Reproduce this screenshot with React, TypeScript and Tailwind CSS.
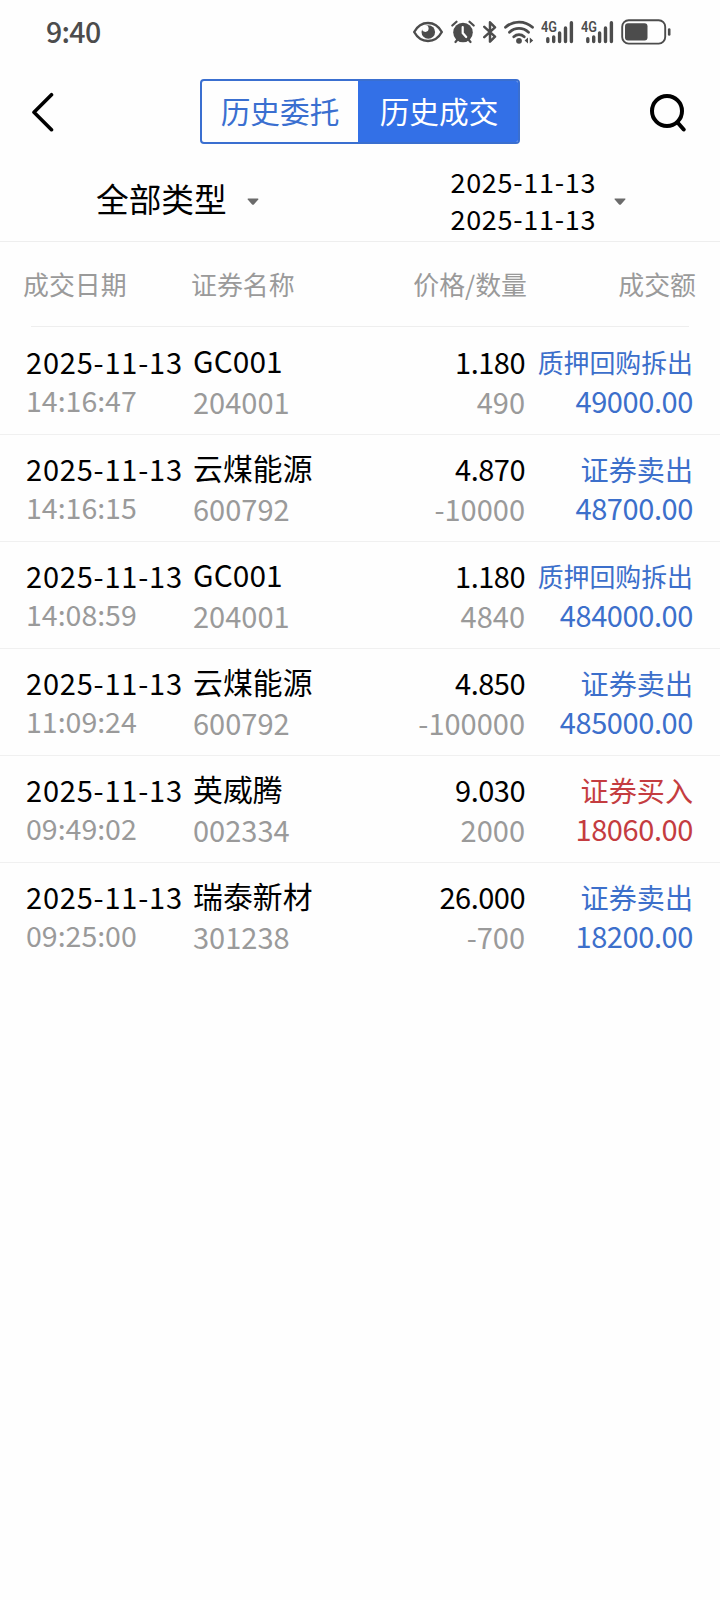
import React from 'react';

type Side = 'buy' | 'sell';

type Trade = {
  date: string;
  time: string;
  name: string;
  code: string;
  price: string;
  quantity: string;
  action: string;
  amount: string;
  side: Side;
};

const trades: Trade[] = [
  { date: '2025-11-13', time: '14:16:47', name: 'GC001', code: '204001', price: '1.180', quantity: '490', action: '质押回购拆出', amount: '49000.00', side: 'sell' },
  { date: '2025-11-13', time: '14:16:15', name: '云煤能源', code: '600792', price: '4.870', quantity: '-10000', action: '证券卖出', amount: '48700.00', side: 'sell' },
  { date: '2025-11-13', time: '14:08:59', name: 'GC001', code: '204001', price: '1.180', quantity: '4840', action: '质押回购拆出', amount: '484000.00', side: 'sell' },
  { date: '2025-11-13', time: '11:09:24', name: '云煤能源', code: '600792', price: '4.850', quantity: '-100000', action: '证券卖出', amount: '485000.00', side: 'sell' },
  { date: '2025-11-13', time: '09:49:02', name: '英威腾', code: '002334', price: '9.030', quantity: '2000', action: '证券买入', amount: '18060.00', side: 'buy' },
  { date: '2025-11-13', time: '09:25:00', name: '瑞泰新材', code: '301238', price: '26.000', quantity: '-700', action: '证券卖出', amount: '18200.00', side: 'sell' },
];

const EyeIcon = () => (
  <svg width="30" height="22" viewBox="0 0 30 22" fill="none">
    <path d="M1.2 11C4.500 5 9.300 2 15 2s10.500 3 13.800 9C25.500 17 20.700 20 15 20S4.500 17 1.200 11Z" stroke="currentColor" strokeWidth="2.400" strokeLinejoin="round" />
    <circle cx="15.300" cy="11" r="6.800" fill="currentColor" />
    <circle cx="12.300" cy="7.600" r="3.300" fill="#fefefe" />
  </svg>
);

const AlarmIcon = () => (
  <svg width="24" height="24" viewBox="0 0 24 24" fill="none">
    <circle cx="12" cy="12.500" r="9.800" fill="currentColor" />
    <path d="M1.300 5.500 5.500 1.700M22.700 5.500 18.500 1.700M4.500 22l2.500-3M19.500 22 17 19" stroke="currentColor" strokeWidth="2.200" strokeLinecap="round" />
    <path d="M11.700 7v6l3.500 4" stroke="#fff" strokeWidth="2.200" strokeLinecap="round" />
  </svg>
);

const BluetoothIcon = () => (
  <svg width="14" height="24" viewBox="0 0 14 24" fill="none">
    <path d="M1.300 6.800 12 16.700l-5 5V2.300l5 5L1.300 17.200" stroke="currentColor" strokeWidth="2.500" strokeLinejoin="round" strokeLinecap="round" />
  </svg>
);

const WifiIcon = () => (
  <svg width="30" height="24" viewBox="0 0 30 24" fill="none">
    <path d="M1.500 7.300c7.500-7 19.500-7 27 0M5.500 12.200c5.500-5 13.500-5 19 0M9.800 16.700c3-2.700 7.400-2.700 10.400 0" stroke="currentColor" strokeWidth="2.800" strokeLinecap="round" />
    <circle cx="15" cy="20.800" r="2.900" fill="currentColor" />
    <path d="M24 17.500v6l-3.400-3ZM25.800 17.500v6l3.400-3Z" fill="currentColor" />
  </svg>
);

const SignalIcon = () => (
  <div className="relative w-[34px] h-6">
    <svg width="34" height="24" viewBox="0 0 34 24" fill="none">
      <path d="M6.800 18.700v2.800M12.700 17v4.500M18.600 13v8.500M24.500 8v13.500M30.400 2.700v18.800" stroke="currentColor" strokeWidth="3.400" strokeLinecap="round" />
    </svg>
    <span className="absolute left-0 top-0 origin-left scale-x-[.82] font-['Roboto',sans-serif] text-[15.5px] leading-[15px] font-semibold">4G</span>
  </div>
);

const BatteryIcon = () => (
  <svg width="50" height="26" viewBox="0 0 50 26" fill="none">
    <rect x="1.200" y="1.200" width="43" height="23.400" rx="6.500" stroke="currentColor" strokeWidth="1.900" />
    <rect x="4" y="4.200" width="22.500" height="17.400" rx="3" fill="currentColor" />
    <path d="M48.200 10.500v5" stroke="currentColor" strokeWidth="2.600" strokeLinecap="round" />
  </svg>
);

const CaretIcon = () => (
  <svg width="12" height="8" viewBox="0 0 12 8">
    <path d="M1.200.5h9.600c.6 0 .9.600.5 1L6.900 6.400c-.5.600-1.300.600-1.800 0L.7 1.500C.300 1.100.600.5 1.200.5Z" fill="#6b6b6b" />
  </svg>
);

const StatusBar = () => (
  <div className="h-16 pl-[46px] pr-[49px] flex items-center justify-between text-[#4c4c4c]">
    <span className="pb-[2px] text-[28.5px] leading-10 font-medium tracking-[-0.7px]">9:40</span>
    <div className="flex items-center">
      <EyeIcon />
      <div className="ml-2"><AlarmIcon /></div>
      <div className="ml-2"><BluetoothIcon /></div>
      <div className="ml-[7px]"><WifiIcon /></div>
      <div className="ml-[7px]"><SignalIcon /></div>
      <div className="ml-[6px]"><SignalIcon /></div>
      <div className="ml-[6px]"><BatteryIcon /></div>
    </div>
  </div>
);

const TopBar = () => (
  <header className="h-24 pl-[30px] pr-8 grid grid-cols-[170px_320px_1fr] items-center">
    <button className="justify-self-start">
      <svg width="26" height="40" viewBox="0 0 26 40" fill="none">
        <path d="M21.500 2.700 4 20.200l17.500 17.500" stroke="#000" strokeWidth="3.600" strokeLinecap="round" strokeLinejoin="round" />
      </svg>
    </button>
    <div className="-mt-px flex h-[65px] rounded border-2 border-[#3a6fd0] overflow-hidden text-[29.7px] leading-[60px]">
      <button className="w-[156px] pb-px text-[#3a6fd0]">历史委托</button>
      <button className="flex-1 pb-px pl-[2px] bg-[#3370e7] text-white">历史成交</button>
    </div>
    <button className="justify-self-end">
      <svg width="40" height="40" viewBox="0 0 40 40" fill="none">
        <circle cx="19" cy="19" r="15" stroke="#000" strokeWidth="4" />
        <path d="m30 31 5.700 6.500" stroke="#000" strokeWidth="4" strokeLinecap="round" />
      </svg>
    </button>
  </header>
);

const FilterBar = () => (
  <div className="h-[82px] flex border-b border-[#eeeeee] text-black">
    <button className="flex-1 pl-[96px] flex items-center">
      <span className="text-[32.7px] leading-[48px] pb-[5px]">全部类型</span>
      <span className="ml-5 mt-[3px]"><CaretIcon /></span>
    </button>
    <button className="flex-1 pl-[85px] flex items-center">
      <span className="pb-[2px] flex flex-col text-left text-[27px] leading-[37px] tracking-[0.7px]">
        <span>2025-11-13</span>
        <span>2025-11-13</span>
      </span>
      <span className="ml-[18px] mt-[3px]"><CaretIcon /></span>
    </button>
  </div>
);

const TableHeader = () => (
  <div className="pl-[23px] pr-6 text-[25.9px] text-[#9a9a9a]">
    <div className="h-[84px] pt-px flex items-center">
      <span className="w-[168px]">成交日期</span>
      <span className="w-[150px]">证券名称</span>
      <span className="w-[186px] text-right">价格/数量</span>
      <span className="flex-1 text-right">成交额</span>
    </div>
    <div className="ml-2 mr-[7px] h-px bg-[#eeeeee]" />
  </div>
);

const TradeRow: React.FC<{ trade: Trade }> = ({ trade }) => {
  const isRepo = trade.action.length > 4;
  return (
    <li className="h-[107px] pl-[26px] pr-[27px] pt-[13px] flex border-b border-[#f0f0f0] last:border-b-0 text-[29px] leading-10 whitespace-nowrap">
      <div className="w-[167px] flex flex-col leading-[38px] pt-px">
        <span className="text-black tracking-[0.8px]">{trade.date}</span>
        <span className="pt-px text-[#9a9a9a] text-[28.5px]">{trade.time}</span>
      </div>
      <div className="w-[160px] flex flex-col">
        <span className="-mt-px mb-px text-black text-[29.8px] tracking-[0.1px]">{trade.name}</span>
        <span className="text-[#9a9a9a]">{trade.code}</span>
      </div>
      <div className="w-[172px] flex flex-col text-right">
        <span className="text-black tracking-[-0.5px]">{trade.price}</span>
        <span className="text-[#9a9a9a]">{trade.quantity}</span>
      </div>
      <div className={`flex-1 flex flex-col text-right ${trade.side === 'buy' ? 'text-[#c43c40]' : 'text-[#3c6fcb]'}`}>
        <span className={isRepo ? 'pt-px -mb-px text-[25.9px]' : 'pt-px -mb-px text-[28.1px]'}>{trade.action}</span>
        <span className="-mt-px tracking-[-0.4px]">{trade.amount}</span>
      </div>
    </li>
  );
};

export default function App() {
  return (
    <div className="w-[720px] min-h-[1600px] bg-[#fefefe] font-['Noto_Sans_CJK_SC',sans-serif]">
      <StatusBar />
      <TopBar />
      <FilterBar />
      <TableHeader />
      <ul className="pt-px">
        {trades.map((trade) => (
          <TradeRow key={`${trade.date}-${trade.time}`} trade={trade} />
        ))}
      </ul>
    </div>
  );
}
